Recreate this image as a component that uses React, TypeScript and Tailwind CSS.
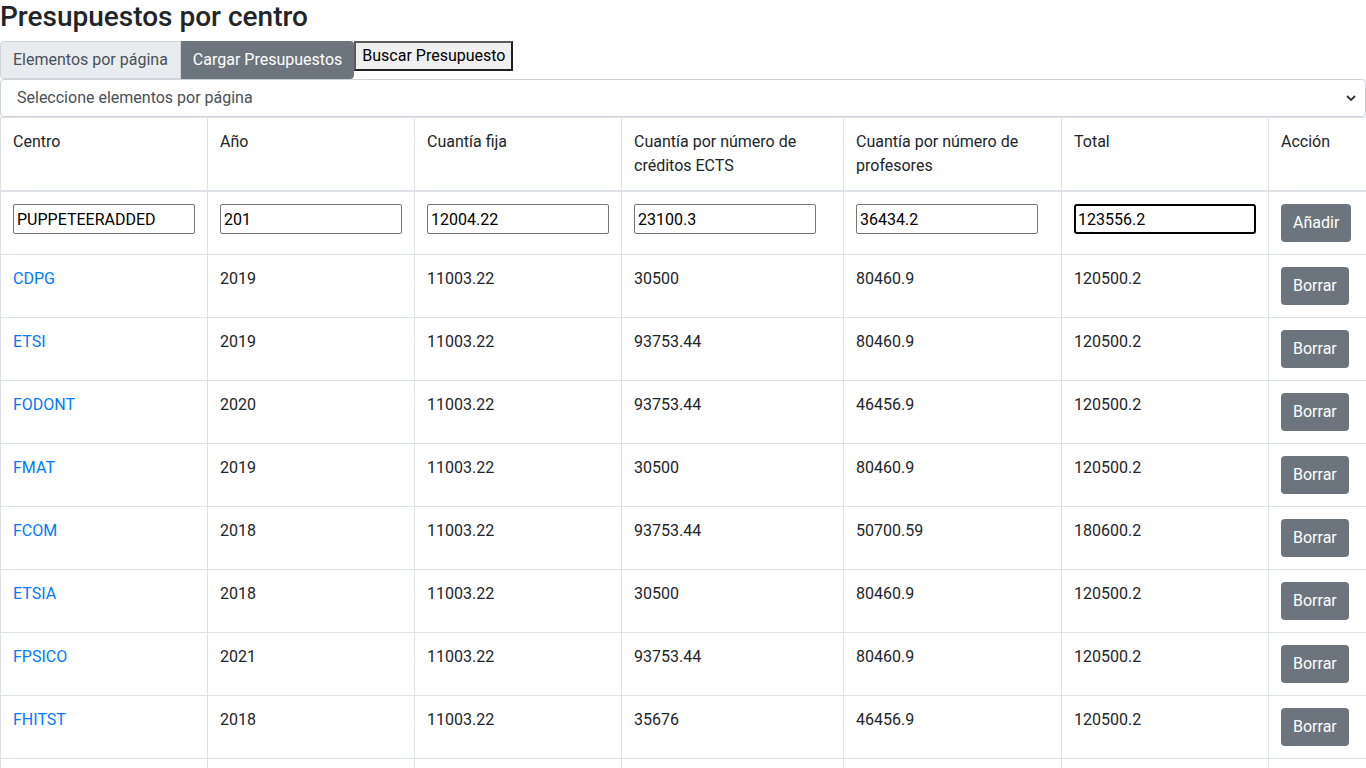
import React from "react";

const ROWS: Array<[string, string, string, string, string, string]> = [
  ["CDPG", "2019", "11003.22", "30500", "80460.9", "120500.2"],
  ["ETSI", "2019", "11003.22", "93753.44", "80460.9", "120500.2"],
  ["FODONT", "2020", "11003.22", "93753.44", "46456.9", "120500.2"],
  ["FMAT", "2019", "11003.22", "30500", "80460.9", "120500.2"],
  ["FCOM", "2018", "11003.22", "93753.44", "50700.59", "180600.2"],
  ["ETSIA", "2018", "11003.22", "30500", "80460.9", "120500.2"],
  ["FPSICO", "2021", "11003.22", "93753.44", "80460.9", "120500.2"],
  ["FHITST", "2018", "11003.22", "35676", "46456.9", "120500.2"],
  ["FDER", "2020", "11003.22", "30500", "80460.9", "120500.2"],
];

const INPUTS = ["PUPPETEERADDED", "201", "12004.22", "23100.3", "36434.2"];

const cell = "border border-[#dee2e6] p-3 align-top text-left";

export default function App() {
  return (
    <div className="font-['Roboto',sans-serif] text-base leading-6 text-[#212529] bg-white">
      <h3 className="text-[28px] leading-[33px] font-medium mb-2">Presupuestos por centro</h3>

      <div className="flex items-start">
        <span className="h-[38px] px-3 flex items-center border border-[#ced4da] rounded-l bg-[#e9ecef] text-[#495057]">
          Elementos por página
        </span>
        <button className="h-[38px] px-3 rounded-r bg-[#6c757d] text-white">Cargar Presupuestos</button>
        <button className="h-[30px] px-1.5 border-2 border-[#1f1f1f] border-t-[#5a5a5a] border-l-[#5a5a5a] bg-[#efefef] text-black">
          Buscar Presupuesto
        </button>
      </div>

      <div className="h-[38px] border border-[#ced4da] rounded flex items-center justify-between pl-4 pr-2 text-[#495057]">
        <span>Seleccione elementos por página</span>
        <svg width="12" height="12" viewBox="0 0 12 12" fill="none" stroke="#333" strokeWidth="1.8">
          <path d="M2 4l4 4 4-4" />
        </svg>
      </div>

      <table className="w-full border-collapse table-fixed">
        <colgroup>
          <col className="w-[207px]" />
          <col className="w-[207px]" />
          <col className="w-[207px]" />
          <col className="w-[222px]" />
          <col className="w-[218px]" />
          <col className="w-[207px]" />
          <col className="w-[98px]" />
        </colgroup>
        <thead>
          <tr>
            <th className={`${cell} font-normal border-b-2`}>Centro</th>
            <th className={`${cell} font-normal border-b-2`}>Año</th>
            <th className={`${cell} font-normal border-b-2`}>Cuantía fija</th>
            <th className={`${cell} font-normal border-b-2`}>Cuantía por número de créditos ECTS</th>
            <th className={`${cell} font-normal border-b-2`}>Cuantía por número de profesores</th>
            <th className={`${cell} font-normal border-b-2`}>Total</th>
            <th className={`${cell} font-normal border-b-2`}>Acción</th>
          </tr>
        </thead>
        <tbody>
          <tr>
            {INPUTS.map((v, i) => (
              <td key={i} className={cell}>
                <input
                  defaultValue={v}
                  className="w-[182px] h-[30px] px-[3px] border border-[#767676] rounded-[2px] text-black"
                />
              </td>
            ))}
            <td className={cell}>
              <input
                defaultValue="123556.2"
                className="w-[182px] h-[30px] px-[2px] border-2 border-black rounded-[3px] text-black outline-none"
              />
            </td>
            <td className={cell}>
              <button className="h-[38px] px-3 rounded bg-[#6c757d] text-white">Añadir</button>
            </td>
          </tr>
          {ROWS.map((r) => (
            <tr key={r[0]}>
              <td className={cell}>
                <a href="#" className="text-[#007bff]">{r[0]}</a>
              </td>
              {r.slice(1).map((v, i) => (
                <td key={i} className={cell}>{v}</td>
              ))}
              <td className={cell}>
                <button className="h-[38px] px-3 rounded bg-[#6c757d] text-white">Borrar</button>
              </td>
            </tr>
          ))}
        </tbody>
      </table>
    </div>
  );
}
